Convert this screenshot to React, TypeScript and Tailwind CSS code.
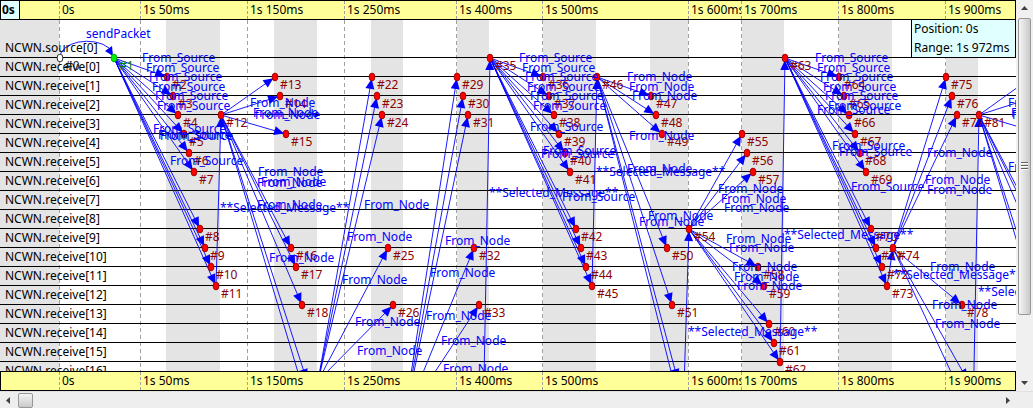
import React from "react";

type Point = [number, number];
type Label = [number, number, string];

const RULER = 20;

const rows = [
  "NCWN.source[0]",
  ...Array.from({ length: 17 }, (_, i) => `NCWN.receive[${i}]`),
];

const ticks = [
  { width: 81, label: "0s" },
  { width: 107, label: "1s 50ms" },
  { width: 97, label: "1s 150ms" },
  { width: 112, label: "1s 250ms" },
  { width: 86, label: "1s 400ms" },
  { width: 146, label: "1s 500ms" },
  { width: 53, label: "1s 600ms" },
  { width: 97, label: "1s 700ms" },
  { width: 107, label: "1s 800ms" },
  { width: 70, label: "1s 900ms" },
];

const tickStarts = ticks.map((_, i) =>
  ticks.slice(0, i).reduce((sum, t) => sum + t.width, 59),
);

const bands: Point[] = [
  [0, 59], [166, 220], [274, 317], [371, 403], [457, 489],
  [543, 596], [650, 688], [742, 784], [839, 892], [946, 978],
];

// Event number -> [x, row]. Row 0 is the source axis.
const events: Record<number, Point> = {
  0: [60, 0], 1: [114, 0], 2: [167, 1], 3: [173, 2], 4: [178, 3], 5: [184, 4],
  6: [189, 5], 7: [194, 6], 8: [200, 9], 9: [205, 10], 10: [211, 11],
  11: [216, 12], 12: [221, 3], 13: [275, 1], 14: [280, 2], 15: [286, 4],
  16: [291, 10], 17: [296, 11], 18: [302, 13], 19: [307, 17], 20: [312, 19],
  21: [318, 17], 22: [372, 1], 23: [377, 2], 24: [382, 3], 25: [388, 10],
  26: [393, 13], 28: [404, 19], 29: [457, 1], 30: [463, 2], 31: [468, 3],
  32: [474, 10], 33: [479, 13], 34: [484, 17], 35: [490, 0], 36: [543, 1],
  37: [549, 2], 38: [554, 3], 39: [559, 4], 40: [565, 5], 41: [570, 6],
  42: [576, 9], 43: [581, 10], 44: [586, 11], 45: [592, 12], 46: [597, 1],
  47: [651, 2], 48: [656, 3], 49: [662, 4], 50: [667, 10], 51: [672, 13],
  52: [678, 17], 53: [683, 19], 54: [689, 9], 55: [742, 4], 56: [747, 5],
  57: [753, 6], 58: [758, 11], 59: [764, 12], 60: [769, 14], 61: [774, 15],
  62: [780, 16], 63: [785, 0], 64: [839, 1], 65: [844, 2], 66: [849, 3],
  67: [855, 4], 68: [860, 5], 69: [866, 6], 70: [871, 9], 71: [876, 10],
  72: [882, 11], 73: [887, 12], 74: [893, 10], 75: [946, 1], 76: [952, 2],
  77: [957, 3], 78: [962, 13], 79: [968, 17], 80: [973, 19], 81: [979, 3],
  82: [1032, 1], 83: [1038, 2], 84: [1043, 4], 85: [1049, 10], 86: [1054, 11],
  87: [1060, 13], 88: [1065, 17], 89: [1070, 19],
};

// Sender -> first and last receiver.
const sends: [number, number, number][] = [
  [1, 2, 11], [11, 12, 12], [12, 13, 20], [21, 22, 26], [28, 29, 33],
  [34, 35, 35], [35, 36, 45], [45, 46, 46], [46, 47, 53], [53, 54, 54],
  [54, 55, 62], [62, 63, 63], [63, 64, 73], [73, 74, 74], [74, 75, 80],
  [80, 81, 81], [81, 82, 89],
];

const S = "From_Source";
const N = "From_Node";
const M = "**Selected_Message**";

const messages: Label[] = [
  [86, 38, "sendPacket"],
  [142, 62, S], [146, 72, S], [149, 81, S], [152, 91, S], [155, 100, S],
  [157, 110, S], [153, 133, S], [158, 139, S], [160, 140, S], [170, 165, S],
  [250, 107, N], [253, 117, N], [255, 119, N], [258, 176, N], [257, 187, N],
  [261, 186, N], [257, 209, N], [220, 212, M], [269, 262, N],
  [364, 209, N], [347, 241, N], [342, 284, N], [355, 326, N], [357, 355, N],
  [445, 245, N], [430, 277, N], [426, 320, N], [441, 345, N], [443, 373, N],
  [519, 62, S], [522, 72, S], [525, 81, S], [527, 91, S], [530, 100, S],
  [533, 110, S], [530, 131, S], [543, 155, S], [541, 158, S], [562, 201, S],
  [489, 197, M], [596, 176, M],
  [627, 81, N], [629, 91, N], [632, 100, N], [629, 140, N], [627, 173, N],
  [648, 220, N], [639, 226, N],
  [718, 193, N], [721, 203, N], [724, 212, N], [726, 243, N], [729, 252, N],
  [732, 271, N], [734, 281, N], [737, 290, N], [688, 336, M], [784, 239, M],
  [815, 62, S], [817, 72, S], [820, 81, S], [823, 91, S], [825, 100, S],
  [828, 110, S], [817, 114, S], [832, 150, S], [839, 156, S], [851, 191, S],
  [927, 157, N], [925, 184, N], [927, 194, N], [1008, 107, N],
  [1011, 117, N], [1012, 119, N], [1008, 171, N],
  [930, 271, N], [893, 279, M], [978, 296, M], [932, 309, N], [935, 328, N],
];

const at = (id: number): Point => [events[id][0], 58 + 19 * events[id][1]];

function arrowHead([x1, y1]: Point, [x2, y2]: Point) {
  const len = Math.hypot(x2 - x1, y2 - y1);
  const ux = (x2 - x1) / len;
  const uy = (y2 - y1) / len;
  const tx = x2 - ux * 2;
  const ty = y2 - uy * 2;
  const bx = tx - ux * 10;
  const by = ty - uy * 10;
  return `${tx},${ty} ${bx - uy * 4.5},${by + ux * 4.5} ${bx + uy * 4.5},${by - ux * 4.5}`;
}

function Arrow({ from, to }: { from: Point; to: Point }) {
  return (
    <g>
      <line x1={from[0]} y1={from[1]} x2={to[0]} y2={to[1]} stroke="#0000ff" strokeWidth="0.9" />
      <polygon points={arrowHead(from, to)} fill="#0000ff" />
    </g>
  );
}

function Backdrop() {
  return (
    <svg className="absolute inset-0 h-full w-full" aria-hidden="true">
      {bands.map(([a, b]) => (
        <rect key={a} x={a} y="0" width={b - a} height="100%" fill="#e4e4e4" />
      ))}
      {tickStarts.map((x) => (
        <line key={x} x1={x + 0.5} x2={x + 0.5} y1="0" y2="100%" stroke="#a0a0a0" strokeDasharray="4 3" />
      ))}
    </svg>
  );
}

function Diagram() {
  const ids = Object.keys(events).map(Number);
  return (
    <svg className="absolute inset-0 h-full w-full text-[12px]" role="img" aria-label="Event sequence">
      <g transform={`translate(0 ${-RULER})`}>
        <path d="M60 58 A27 16 0 0 1 109 48" fill="none" stroke="#0000ff" strokeWidth="0.9" />
        <polygon points="113,56 105,51 112,46" fill="#0000ff" />
        {sends.flatMap(([from, first, last]) =>
          Array.from({ length: last - first + 1 }, (_, i) => (
            <Arrow key={`${from}-${first + i}`} from={at(from)} to={at(first + i)} />
          )),
        )}
        {ids.map((id) => {
          const [x, y] = at(id);
          const fill = id === 0 ? "#ffffff" : id === 1 ? "#00f000" : "#ff0000";
          const edge = id === 0 ? "#000000" : id === 1 ? "#00a000" : "#8b0000";
          const ink = id === 0 ? "#202020" : id === 1 ? "#008000" : "#8b0000";
          return (
            <g key={id}>
              <ellipse cx={x} cy={y} rx="2.9" ry="3.9" fill={fill} stroke={edge} strokeWidth="0.8" />
              <text x={x + 5} y={y + 12} fill={ink}>{`#${id}`}</text>
            </g>
          );
        })}
        {messages.map(([x, y, text], i) => (
          <text key={i} x={x} y={y} fill="#0000ff">{text}</text>
        ))}
      </g>
    </svg>
  );
}

function Ruler({ origin, className }: { origin?: string; className: string }) {
  return (
    <div className={`flex shrink-0 overflow-hidden border-r border-black bg-[#ffff99] ${className}`}>
      <div className="flex w-[59px] shrink-0">
        {origin ? (
          <span className="w-5 border-x border-black bg-[#e0ffff] pl-px font-bold">{origin}</span>
        ) : (
          <span className="border-l border-black" />
        )}
      </div>
      {ticks.map((t) => (
        <span
          key={t.label}
          className="shrink-0 overflow-hidden border-l border-dashed border-[#a0a0a0] pl-0.5 whitespace-nowrap"
          style={{ width: t.width }}
        >
          {t.label}
        </span>
      ))}
    </div>
  );
}

function ScrollButton({ label, points }: { label: string; points: string }) {
  return (
    <button type="button" aria-label={label} className="flex size-[17px] shrink-0 items-center justify-center">
      <svg width="9" height="9" viewBox="0 0 9 9" aria-hidden="true">
        <polygon points={points} fill="#404040" />
      </svg>
    </button>
  );
}

export default function App() {
  return (
    <main className="flex h-screen flex-col overflow-hidden bg-[#eeeeee] font-['Noto_Sans',sans-serif] text-[12px] text-black">
      <div className="flex min-h-0 flex-1">
        <section className="flex min-w-0 flex-1 flex-col">
          <Ruler origin="0s" className="h-5 border-y leading-[18px]" />
          <div className="relative min-h-0 flex-1 overflow-hidden bg-white">
            <Backdrop />
            <ul className="relative pt-[19px]">
              {rows.map((name) => (
                <li key={name} className="h-[19px] border-b border-black pl-[5px] leading-[17px]">
                  {name}
                </li>
              ))}
            </ul>
            <Diagram />
            <div className="absolute top-0 right-0 w-[105px] border-x border-b border-black bg-[#e0ffff] pl-0.5 leading-[19px] whitespace-nowrap">
              <p className="h-[18px] leading-[18px]">Position: 0s</p>
              <p>Range: 1s 972ms</p>
            </div>
          </div>
          <Ruler className="h-5 border-y leading-[18px]" />
        </section>
        <div className="flex w-[17px] shrink-0 flex-col items-center bg-[#f0f0f0]">
          <ScrollButton label="Scroll up" points="4.5,2 8,6 1,6" />
          <div className="flex min-h-0 w-full flex-1 flex-col px-0.5 pt-px">
            <div className="flex h-5/6 items-center justify-center rounded-xs border border-[#979797] bg-linear-to-r from-[#f5f5f5] to-[#c9c9cb]">
              <svg width="7" height="8" viewBox="0 0 7 8" aria-hidden="true">
                <path d="M0 .5H7M0 3.5H7M0 6.5H7" stroke="#606060" />
                <path d="M0 1.5H7M0 4.5H7M0 7.5H7" stroke="#ffffff" />
              </svg>
            </div>
          </div>
          <ScrollButton label="Scroll down" points="1,3 8,3 4.5,7" />
        </div>
      </div>
      <div className="flex h-[17px] shrink-0 items-center border-t border-[#e0e0e0] pr-[17px]">
        <ScrollButton label="Scroll left" points="6,1 6,8 2,4.5" />
        <div className="flex-1 px-px">
          <div className="h-[15px] w-[15px] rounded-xs border border-[#979797] bg-linear-to-b from-[#f5f5f5] to-[#c9c9cb]" />
        </div>
        <ScrollButton label="Scroll right" points="3,1 3,8 7,4.5" />
      </div>
    </main>
  );
}
